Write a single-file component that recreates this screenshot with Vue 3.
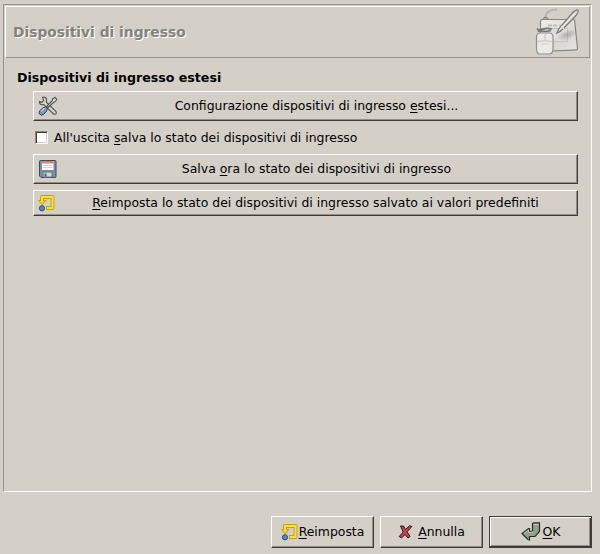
<script setup>
import { ref } from 'vue'

const saveOnExit = ref(false)
</script>

<template>
  <main class="window">
    <section class="frame">
      <header class="header">
        <h1>Dispositivi di ingresso</h1>
        <svg class="tablet" width="48" height="48" viewBox="0 0 48 48">
          <defs>
            <linearGradient id="pad" x1="0" y1="0" x2="1" y2="1">
              <stop offset="0" stop-color="#eeeeec" />
              <stop offset=".6" stop-color="#d9d8d5" />
              <stop offset="1" stop-color="#e6e5e2" />
            </linearGradient>
            <radialGradient id="shade">
              <stop offset="0" stop-color="#77756f" stop-opacity=".45" />
              <stop offset="1" stop-color="#77756f" stop-opacity="0" />
            </radialGradient>
          </defs>
          <path d="M10 10C11 4 14 2 22 1.700" fill="none" stroke="#b3b2ae" stroke-width="1.800" />
          <path d="M8.500 12V10.500Q8.500 9.500 10 9.500H11.500Q13 9.500 13 11V12" fill="#bcbbb7" stroke="#74736f" />
          <path d="M7.500 11.500H38Q39.500 11.500 39.700 13L42.500 40Q42.500 42 41 41.900L7 43.500Q5.500 43.500 5.500 42V13Q5.500 11.500 7.500 11.500Z" fill="url(#pad)" stroke="#878682" stroke-width="1.200" />
          <path d="M13.500 20.500H32.500V33.500H13.500Z" fill="#dedddb" stroke="#c5c4c0" />
          <path d="M13 17.500H22" stroke="#c0bfbb" stroke-width="2" stroke-dasharray="4 1" />
          <path d="M24 17.500H31" stroke="#cac7bb" stroke-width="2" stroke-dasharray="3 1" />
          <ellipse cx="32" cy="27" rx="11" ry="5" fill="url(#shade)" transform="rotate(-20 32 27)" />
          <path d="M21.800 25.300L24 20.500L37 5.500Q41.500 1 43 2.200Q43.900 3.500 41 7.500L28.500 20.500Q25 24 21.800 25.300Z" fill="#dad9d6" stroke="#7a7975" stroke-width="1.200" />
          <path d="M25 21.500L40 5M26 18.500L29 21" fill="none" stroke="#f5f5f3" />
          <path d="M2 20.500Q6 25 16 22.500M3 23.500Q9 19 17 21" fill="none" stroke="#747470" stroke-width="1.800" />
          <path d="M5 25H14Q18 25 18 29V41Q18 46 14 46H5Q1.500 46 1.500 41V29Q1.500 25 5 25Z" fill="#ebeae8" stroke="#92918d" stroke-width="1.200" />
          <path d="M2 33.500Q9 32 17.500 33.500M10 25.500V33" fill="none" stroke="#c4c3bf" />
          <path d="M6 36H14" stroke="#d3d2ce" />
        </svg>
      </header>

      <div class="body">
        <h2>Dispositivi di ingresso estesi</h2>
        <div class="options">
          <button class="btn wide" type="button">
            <svg width="20" height="20" viewBox="0 0 20 20">
              <path d="M4.500 1.300L6.500 1Q9 2 8.500 4.500L8.200 6L18 15.500Q18.800 17 17.800 18Q16.500 18.800 15 17.500L5.800 8.500L3.500 8.800Q1.300 8 1.500 5.500L4 6.300L5.700 4.300Z" fill="#d5d5d1" stroke="#555754" stroke-width="1.100" />
              <path d="M15 2.500L17 1.500L18.700 3.200L17.700 5.200L15.500 6.500L10 11.500L8.800 10.300L14 5Z" fill="#deded9" stroke="#4b4d4b" stroke-width="1.100" />
              <path d="M7.500 10.700L9.500 12.500Q9 15.500 5.500 18.500Q3.500 20 1.500 18Q.5 16.500 2 14.500Q5 11.200 7.500 10.700Z" fill="#7898bd" stroke="#30445b" />
              <path d="M3 15.500L6.500 12.300" stroke="#b5cce3" stroke-width="1.500" />
            </svg>
            <span class="label">Configurazione dispositivi di ingresso <u>e</u>stesi...</span>
          </button>
          <label class="check">
            <input v-model="saveOnExit" type="checkbox" />
            <span>All'uscita <u>s</u>alva lo stato dei dispositivi di ingresso</span>
          </label>
          <button class="btn wide" type="button">
            <svg width="20" height="20" viewBox="0 0 20 20">
              <path d="M2.500 1.500H17Q18 1.500 18 2.500V17.500Q18 18.500 17 18.500H3L1.500 17V2.500Q1.500 1.500 2.500 1.500Z" fill="#7591a8" stroke="#47484a" />
              <path d="M4 2H15.500V11H4Z" fill="#fafafa" />
              <path d="M4 2H15.500V4.500H4Z" fill="#df7f75" />
              <path d="M5 6.500H14.500M5 8.500H14.500" stroke="#d2d2d0" />
              <path d="M5 13H14V18H5Z" fill="#d8d9d6" stroke="#69747a" />
              <path d="M6.500 14.500H8.500V17.500H6.500Z" fill="#4d5b63" />
            </svg>
            <span class="label">Salva <u>o</u>ra lo stato dei dispositivi di ingresso</span>
          </button>
          <button class="btn wide short" type="button">
            <svg width="18" height="18" viewBox="0 0 18 18">
              <path d="M4 8V3H14.500V14H8" fill="none" stroke="#c4a000" stroke-width="3.800" stroke-linejoin="round" />
              <path d="M.7 6.500H7.800L4.200 10.800Z" fill="#f3d72c" stroke="#c4a000" />
              <path d="M4 8V3H14.500V14H8.800" fill="none" stroke="#f9e03f" stroke-width="2" />
              <circle cx="4" cy="14.300" r="2.600" fill="#5d84b6" stroke="#2c5186" />
            </svg>
            <span class="label"><u>R</u>eimposta lo stato dei dispositivi di ingresso salvato ai valori predefiniti</span>
          </button>
        </div>
      </div>
    </section>

    <footer class="actions">
      <button class="btn action" type="button">
        <svg width="18" height="18" viewBox="0 0 18 18">
          <path d="M4 8V3H14.500V14H8" fill="none" stroke="#c4a000" stroke-width="3.800" stroke-linejoin="round" />
          <path d="M.7 6.500H7.800L4.200 10.800Z" fill="#f3d72c" stroke="#c4a000" />
          <path d="M4 8V3H14.500V14H8.800" fill="none" stroke="#f9e03f" stroke-width="2" />
          <circle cx="4" cy="14.300" r="2.600" fill="#5d84b6" stroke="#2c5186" />
        </svg>
        <span><u>R</u>eimposta</span>
      </button>
      <button class="btn action cancel" type="button">
        <svg width="15" height="16" viewBox="0 0 15 16">
          <path d="M2.500 2H5.500L7.500 5.500L11.500 1.800L13.800 2.500L9.200 7.800L12 12.500L10 14L7 10.500L3.500 14L1.200 12.500L5.200 8Z" fill="#bf444e" stroke="#2d1718" />
        </svg>
        <span><u>A</u>nnulla</span>
      </button>
      <button class="btn action ok" type="button">
        <svg width="20" height="20" viewBox="0 0 20 20">
          <path d="M11.500 1.500L13 .8H18.500V9.500L14 14.500H8.500V18L7 17.500L1 11.500L7.500 6.500H8.500V9.500L11.500 9Z" fill="#8fa18a" stroke="#252d24" stroke-width="1.200" />
          <path d="M12.500 2.500H17.500M3 11.500L7.500 8V10.500L12 10" fill="none" stroke="#bdccb9" />
        </svg>
        <span><u>O</u>K</span>
      </button>
    </footer>
  </main>
</template>

<style>
body { background: #d4d0c8; }
</style>
<style scoped>
* { box-sizing: border-box; }
.window {
  display: flex;
  flex-direction: column;
  gap: 24px;
  height: 554px;
  padding: 4px 8px 6px 3px;
  font: 12.430px/16px "DejaVu Sans", sans-serif;
  color: #000;
  background: #d4d0c8;
}
.frame {
  flex: 1;
  border: 1px solid;
  border-color: #9a9486 #fff #fff #9a9486;
  padding: 1px;
}
.header {
  display: flex;
  align-items: center;
  justify-content: space-between;
  height: 52px;
  padding: 0 6px 0 7px;
  border: 1px solid;
  border-color: #fff #9a9486 #9a9486 #fff;
}
h1 {
  margin: 0;
  font-size: 13.820px;
  font-weight: bold;
  color: #85837e;
  text-shadow: 1px 1px #fff;
}
.tablet { display: block; }
.body { padding: 12px 12px 0 12px; }
h2 {
  margin: 0;
  font-size: 12.600px;
  font-weight: bold;
}
.options {
  display: flex;
  flex-direction: column;
  padding: 5px 0 0 16px;
}
.btn {
  display: flex;
  align-items: center;
  height: 32px;
  margin: 0;
  padding: 0;
  font: inherit;
  color: inherit;
  background: #d4d0c8;
  border: 1px solid;
  border-color: #fff #403c38 #403c38 #fff;
  box-shadow: inset -1px -1px #918d84;
}
.btn svg { flex: none; }
.wide { height: 30px; padding: 0 2px 0 4px; }
.label { flex: 1; text-align: center; white-space: nowrap; }
.short { height: 26px; margin-top: 6px; }
.check {
  display: flex;
  align-items: center;
  gap: 6px;
  height: 33px;
  padding-left: 2px;
}
.check input {
  appearance: none;
  width: 13px;
  height: 13px;
  margin: 0;
  border: 1px solid;
  border-color: #8a867d #fff #fff #8a867d;
  background: #fff;
  box-shadow: inset 1px 1px #403c38, inset -1px -1px #d4d0c8;
}
u { text-decoration-thickness: 1px; text-underline-offset: 2px; }
.actions { display: flex; justify-content: flex-end; gap: 6px; height: 32px; }
.action { width: 103px; justify-content: center; }
.cancel { gap: 5px; }
.ok {
  gap: 2px;
  border: 1px solid #403c38;
  border-bottom-width: 2px;
  box-shadow: inset 1px 1px #fff, inset -1px 0 #403c38, inset -2px -1px #918d84;
}
</style>
